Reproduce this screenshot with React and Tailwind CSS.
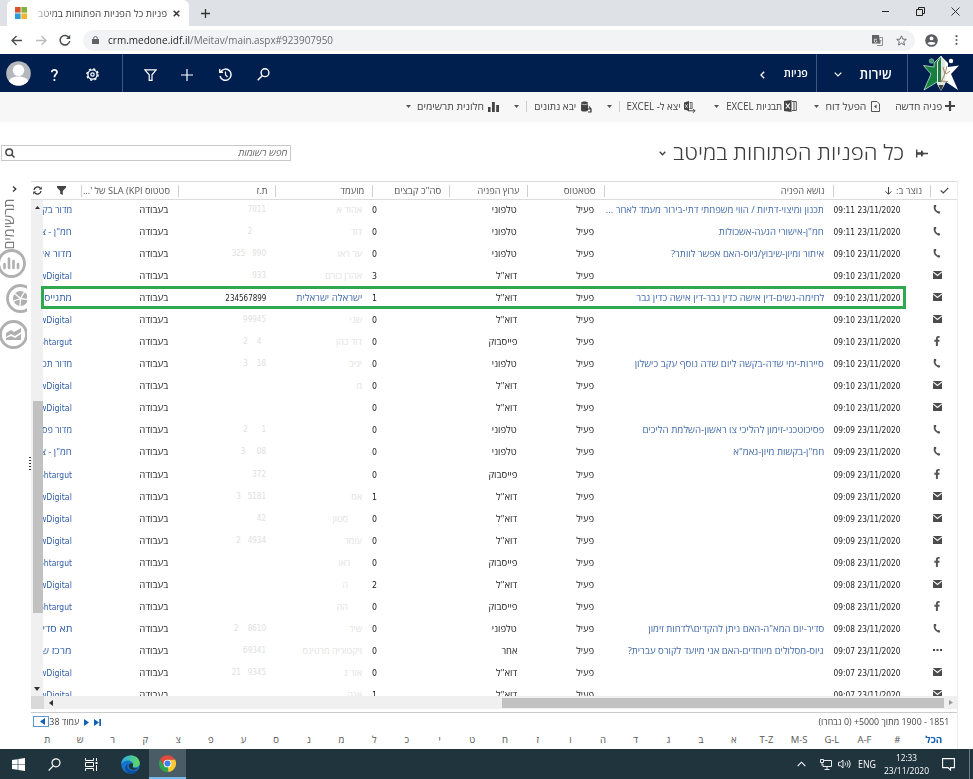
import { useLayoutEffect, useRef, useState } from 'react';
import { FaFacebookF } from 'react-icons/fa';

// Text squeezed or stretched horizontally to a known width.
function Fit({ w, className = '', inner = '', rtl = false, children }) {
  const ref = useRef(null);
  const [scale, setScale] = useState(1);
  useLayoutEffect(() => {
    const natural = parseFloat(getComputedStyle(ref.current).width) || w;
    setScale(w / natural);
  }, [w]);
  return (
    <span className={`flex shrink-0 ${className}`} style={{ width: w }} dir={rtl ? 'rtl' : 'ltr'}>
      <span
        ref={ref}
        className={`shrink-0 whitespace-nowrap ${inner} ${rtl ? 'origin-right' : 'origin-left'}`}
        style={{ transform: `scaleX(${scale})` }}
      >
        {children}
      </span>
    </span>
  );
}

const M = 'מתגייסי';
const ROWS = [
  ['p', '09:11', 'תכנון ומיצוי-דתיות / הווי משפחתי דתי-בירור מעמד לאחר ...', 218, 't', '0', 'אהוד א', '    7011', 'מדור בק'],
  ['p', '09:11', 'חמ"ן-אישורי הגעה-אשכולות', 105, 't', '0', 'דוד', '2      ', 'חמ"ן - צ'],
  ['p', '09:10', 'איתור ומיון-שיבוץ/גיוס-האם אפשר לוותר?', 153, 't', '0', 'ער ראו', '325   990', 'מדור אי'],
  ['m', '09:10', '', 0, 'e', '3', 'אהרן כורם', '    933', 'wDigital'],
  ['m', '09:10', 'לחימה-נשים-דין אישה כדין גבר-דין אישה כדין גבר', 188, 'e', '1', 'x', 'x', M],
  ['m', '09:10', '', 0, 'e', '0', 'שני', '   99945', 'wDigital'],
  ['f', '09:10', '', 0, 'b', '0', 'דוד כהן', '2    4  ', 'Shtargut'],
  ['p', '09:10', 'סיירות-ימי שדה-בקשה ליום שדה נוסף עקב כישלון', 189, 't', '0', 'יניב', '3    18', 'מדור תכ'],
  ['m', '09:10', '', 0, 'e', '0', 'מ', '', 'wDigital'],
  ['m', '09:10', '', 0, 'e', '0', '', '', 'wDigital'],
  ['p', '09:09', 'פסיכוטכני-זימון להליכי צו ראשון-השלמת הליכים', 182, 't', '0', '', '2      1', 'מדור פס'],
  ['p', '09:09', 'חמ"ן-בקשות מיון-גאמ"א', 91, 't', '0', '', '3     08', 'חמ"ן - צ'],
  ['f', '09:09', '', 0, 'b', '0', '', '     372', 'Shtargut'],
  ['m', '09:09', '', 0, 'e', '1', 'אס', '3   5181', 'wDigital'],
  ['m', '09:09', '', 0, 'e', '0', '      סטון', '    42', 'wDigital'],
  ['m', '09:09', '', 0, 'e', '0', 'עומר', '2   4934', 'wDigital'],
  ['f', '09:08', '', 0, 'b', '0', '     ראו', '', 'Shtargut'],
  ['m', '09:08', '', 0, 'e', '2', '      ה', '', 'wDigital'],
  ['f', '09:08', '', 0, 'b', '0', '      הה', '', 'Shtargut'],
  ['p', '09:08', 'סדיר-יום המא"ה-האם ניתן להקדים\\לדחות זימון', 176, 't', '0', 'שיר', '2    8610', 'תא סדי'],
  ['o', '09:07', 'גיוס-מסלולים מיוחדים-האם אני מיועד לקורס עברית?', 196, 'o', '0', 'ויקטוריה מרטינס', '   69341', 'מרכז ש'],
  ['m', '09:07', '', 0, 'e', '0', 'אור ג', '21   9345', 'wDigital'],
  ['m', '09:07', '', 0, 'e', '1', 'אנה', '', 'wDigital'],
];
const CHANNEL = { t: ['טלפוני', 25], e: ['דוא"ל', 21], b: ['פייסבוק', 29], o: ['אחר', 16] };
const UNIT_W = { wDigital: 32, Shtargut: 33, 'חמ"ן - צ': 31, [M]: 30 };

function RowIcon({ kind }) {
  if (kind === 'p')
    return (
      <svg className="h-[10px] w-[8px]" viewBox="0 0 8 10" fill="none" stroke="#505050" strokeWidth="1.5">
        <path d="M2 1.5 C.6 4.5 2.5 8 5.8 8.7" strokeWidth="1.7" />
        <path d="M2 1v2.2 M4.9 8l2 .8" strokeWidth="2.3" />
      </svg>
    );
  if (kind === 'f') return <FaFacebookF className="h-[10px] w-[8px] text-[#555]" />;
  if (kind === 'o')
    return (
      <svg className="h-[4px] w-[9px]" viewBox="0 0 9 4" fill="#444">
        <rect y="1" width="2" height="2" /><rect x="3.5" y="1" width="2" height="2" /><rect x="7" y="1" width="2" height="2" />
      </svg>
    );
  return (
    <svg className="h-[8px] w-[9px]" viewBox="0 0 9 8">
      <path d="M0 0h9v8H0z" fill="#4c4c4c" />
      <path d="M0 .8 4.5 4.5 9 .8" fill="none" stroke="#fff" strokeWidth="1.1" />
    </svg>
  );
}

const TAHOMA = "font-['DejaVu_Sans_Condensed','DejaVu_Sans',sans-serif]";

function Row({ r }) {
  const [kind, time, subject, sw, ch, count, name, id, unit] = r;
  const c = CHANNEL[ch];
  const latin = /^[a-z]/i.test(unit);
  return (
    <div className="flex h-[22.04px] shrink-0 items-center">
      <div className="flex w-[27px] shrink-0 justify-end pb-[2px] pl-[2px]"><span className="flex w-[10px] justify-center"><RowIcon kind={kind} /></span></div>
      <div className={`w-[97px] shrink-0 pr-[29px] ${TAHOMA}`}><Fit w={67} rtl><bdo dir="ltr">{time} 23/11/2020</bdo></Fit></div>
      <div className="w-[229px] shrink-0 pr-[9px] text-[#416aa8]">{subject && <Fit w={sw} rtl>{subject}</Fit>}</div>
      <div className="w-[77px] shrink-0 pr-[10px]"><Fit w={18} rtl>פעיל</Fit></div>
      <div className="w-[78px] shrink-0 pr-[10px]"><Fit w={c[1]} rtl>{c[0]}</Fit></div>
      <div className={`flex w-[77px] shrink-0 justify-end ${TAHOMA}`}><Fit w={5}>{count}</Fit></div>
      <div className="w-[97px] shrink-0 overflow-hidden whitespace-pre pr-[10px] text-[#e2e2e2]">
        {name === 'x' ? <Fit w={66} rtl className="text-[#416aa8]">ישראלה ישראלית</Fit> : name}
      </div>
      <div className={`w-[97px] shrink-0 pr-[9px] ${TAHOMA}`}>
        {id === 'x' ? <Fit w={41} rtl>234567899</Fit> : <span dir="ltr" className="block whitespace-pre text-right text-[8px] text-[#e0e0e0]">{id}</span>}
      </div>
      <div className="w-[97px] shrink-0 pr-[10px]"><Fit w={29} rtl>בעבודה</Fit></div>
      <div className={`w-[38px] shrink-0 overflow-hidden pr-[9px] text-[#2f5da6] ${latin ? TAHOMA : ''}`}><Fit w={UNIT_W[unit] || 30} rtl>{unit}</Fit></div>
    </div>
  );
}

function Head({ width, children }) {
  return (
    <div className={`flex h-[12px] shrink-0 items-center border-l border-[#d0d0d0] pr-[8px] ${width}`}>{children}</div>
  );
}

function Caret({ className }) {
  return <svg className={`h-[3px] w-[5px] shrink-0 ${className}`} viewBox="0 0 5 3"><path d="M0 0h5L2.5 3z" fill="#555" /></svg>;
}

function ChromeTop() {
  return (
    <>
      <div className="flex h-[26px] bg-[#dee1e6]">
        <div className="ml-[7px] flex h-[26px] w-[182px] shrink-0 items-center rounded-t-[6px] bg-white">
          <svg className="ml-[8px] h-[12px] w-[12px] shrink-0" viewBox="0 0 12 12">
            <path d="M0 0h5.6v5.6H0z" fill="#d8532c" /><path d="M6.4 0H12v5.6H6.4z" fill="#84b13a" />
            <path d="M0 6.4h5.6V12H0z" fill="#2f9bd8" /><path d="M6.4 6.4H12V12H6.4z" fill="#f2b52e" />
          </svg>
          <div className="ml-[11px] w-[129px] shrink-0 text-[10px] text-[#454545] [mask-image:linear-gradient(to_left,#000_85%,#0005)]">
            <Fit w={129} rtl>פניות כל הפניות הפתוחות במיטב</Fit>
          </div>
          <svg className="ml-[6px] h-[7px] w-[7px] shrink-0" viewBox="0 0 7 7" stroke="#333" strokeWidth="1.5"><path d="M.7.7l5.6 5.6M6.3.7.7 6.3" /></svg>
        </div>
        <svg className="ml-[12px] mt-[9px] h-[9px] w-[9px]" viewBox="0 0 9 9" stroke="#333" strokeWidth="1.3"><path d="M4.5 0v9M0 4.5h9" /></svg>
        <div className="grow" />
        <svg className="mr-[27px] mt-[11px] h-[1px] w-[7px]" viewBox="0 0 7 1"><path d="M0 0h7v1H0z" fill="#222" /></svg>
        <svg className="mr-[26px] mt-[7px] h-[9px] w-[9px]" viewBox="0 0 9 9" fill="none" stroke="#222"><path d="M.5 2.5h6v6h-6zM2.5 2V.5h6v6H7" /></svg>
        <svg className="mr-[13px] mt-[7px] h-[9px] w-[9px]" viewBox="0 0 9 9" stroke="#222" strokeWidth=".9"><path d="M.5.5l8 8M8.5.5l-8 8" /></svg>
      </div>
      <div className="flex h-[28px] items-center bg-white">
        <svg className="ml-[11px] h-[11px] w-[11px] shrink-0" viewBox="0 0 11 11" fill="none" stroke="#4a4d51" strokeWidth="1.4"><path d="M11 5.5H1M5.5 1 1 5.5 5.5 10" /></svg>
        <svg className="ml-[14px] h-[11px] w-[11px] shrink-0" viewBox="0 0 11 11" fill="none" stroke="#b9bbbe" strokeWidth="1.3"><path d="M0 5.5h10M5.5 1 10 5.5 5.5 10" /></svg>
        <svg className="ml-[12px] h-[12px] w-[12px] shrink-0" viewBox="0 0 12 12" fill="none" stroke="#4a4d51" strokeWidth="1.5"><path d="M10 3.6A4.8 4.8 0 1 0 10.7 7" /><path d="M11.2.8v4.2H7z" fill="#4a4d51" stroke="none" /></svg>
        <div className="ml-[12px] flex h-[21px] w-[832px] shrink-0 items-center rounded-full bg-[#f1f3f4] text-[11px]">
          <svg className="ml-[9px] h-[8px] w-[7px] shrink-0" viewBox="0 0 7 8"><path d="M0 3h7v5H0z" fill="#5f6368" /><path d="M1.7 3.5V2.2a1.8 1.7 0 0 1 3.6 0v1.3" fill="none" stroke="#5f6368" /></svg>
          <Fit w={82} className="ml-[9px] text-[#26282b]">crm.medone.idf.il</Fit>
          <Fit w={143} className="text-[#6a6d71]">/Meitav/main.aspx#923907950</Fit>
          <div className="grow" />
          <svg className="h-[11px] w-[11px]" viewBox="0 0 11 11"><path d="M0 0h7l1.2 8.5H0z" fill="#5f6368" /><path d="M7.5 2.5H10.5v8H5" fill="none" stroke="#777" strokeWidth=".8" /><path d="M5 4.3H2.3v1.8a1.3 1.3 0 0 0 2.6 0H4" fill="none" stroke="#fff" strokeWidth=".7" /><path d="M9.5 5.5H7.8v3.3M9 7H8" stroke="#777" strokeWidth=".7" fill="none" /></svg>
          <svg className="ml-[13px] mr-[8px] h-[11px] w-[11px]" viewBox="0 0 24 24" fill="none" stroke="#5f6368" strokeWidth="2"><path d="m12 2 3 7 7.5.6-5.7 5 1.8 7.4-6.6-4-6.6 4 1.8-7.400-5.700-5L9 9z" /></svg>
        </div>
        <svg className="ml-[10px] h-[13px] w-[13px]" viewBox="0 0 13 13"><circle cx="6.5" cy="6.5" r="6.3" fill="#5a5d61" /><circle cx="6.5" cy="4.4" r="1.9" fill="#fff" /><path d="M2.5 9.3C3.300 7.700 9.700 7.700 10.500 9.300 8.800 11.400 4.200 11.400 2.500 9.300z" fill="#fff" /></svg>
        <svg className="ml-[17px] h-[10px] w-[3px]" viewBox="0 0 3 10" fill="#5a5d61"><circle cx="1.5" cy="1.2" r="1.1" /><circle cx="1.5" cy="5" r="1.1" /><circle cx="1.5" cy="8.8" r="1.1" /></svg>
      </div>
    </>
  );
}

function NavBar() {
  return (
    <div className="flex h-[38px] items-center bg-[#001f4e] text-white">
      <svg className="ml-[6px] h-[25px] w-[25px] shrink-0" viewBox="0 0 25 25">
        <circle cx="12.5" cy="12.5" r="12.3" fill="#b4b7bb" />
        <circle cx="12.5" cy="9.3" r="5.8" fill="#fff" /><path d="M3 20.200C4 14 21 14 22 20.200 17 26 8 26 3 20.200z" fill="#fff" />
      </svg>
      <svg className="ml-[20px] mt-[3px] h-[12px] w-[7px] shrink-0" viewBox="0 0 7 12" fill="none" stroke="#fff" strokeWidth="1.7"><path d="M.8 3.200C.8 0 6.100.3 6 3.200 6 5.200 3.400 5.300 3.400 8.300" /><path d="M3.400 10v2" /></svg>
      <svg className="ml-[28px] mt-[3px] h-[13px] w-[13px] shrink-0" viewBox="0 0 13 13" fill="none" stroke="#fff"><circle cx="6.5" cy="6.5" r="4.6" strokeWidth="1.3" /><circle cx="6.5" cy="6.5" r="1.7" strokeWidth="1.2" /><circle cx="6.5" cy="6.5" r="5.6" strokeWidth="1.4" strokeDasharray="2.2 2.2" /></svg>
      <div className="ml-[23px] h-[38px] w-px shrink-0 bg-[#40577b]" />
      <svg className="ml-[21px] mt-[3px] h-[12px] w-[13px] shrink-0" viewBox="0 0 13 12" fill="none" stroke="#fff" strokeWidth="1.2"><path d="M.9.8h11.200L8 5.800v5.500H5.200V5.800z" /></svg>
      <svg className="ml-[24px] mt-[3px] h-[12px] w-[12px] shrink-0" viewBox="0 0 12 12" stroke="#fff" strokeWidth="1.2"><path d="M6 0v12M0 6h12" /></svg>
      <svg className="ml-[26px] mt-[2px] h-[13px] w-[13px] shrink-0" viewBox="0 0 13 13" fill="none" stroke="#fff" strokeWidth="1.4"><path d="M1.700 3.700A5.600 5.600 0 1 1 1 8M.7 1v3.300H4" /><path d="M6.500 3.500v3.300l2 2.200" strokeWidth="1.2" /></svg>
      <svg className="ml-[25px] mt-[2px] h-[13px] w-[13px] shrink-0" viewBox="0 0 13 13" fill="none" stroke="#fff" strokeWidth="1.4"><circle cx="8" cy="4.7" r="3.9" /><path d="M5.200 7.700.7 12.300" /></svg>
      <div className="grow" />
      <svg className="mr-[19px] mt-[3px] h-[8px] w-[5px]" viewBox="0 0 5 8" fill="none" stroke="#fff" strokeWidth="1.3"><path d="M4.200.7 1 4l3.200 3.300" /></svg>
      <Fit w={24} rtl className="mt-[1px] text-[11px] font-semibold">פניות</Fit>
      <div className="ml-[8px] h-[38px] w-px bg-[#40577b]" />
      <svg className="ml-[17px] mt-[3px] h-[5px] w-[8px]" viewBox="0 0 8 5" fill="none" stroke="#fff" strokeWidth="1.2"><path d="M.7.7 4 4 7.300.7" /></svg>
      <Fit w={32} rtl className="ml-[18px] text-[14px] font-semibold">שירות</Fit>
      <div className="ml-[15px] h-[38px] w-px bg-[#40577b]" />
      <svg className="ml-[14px] mr-[13px] h-[37px] w-[38px]" viewBox="0 0 38 37">
        <circle cx="9.5" cy="6" r="2.300" fill="#3c9a75" stroke="#9cc8b4" strokeWidth=".6" /><circle cx="29" cy="6" r="2.2" fill="#fff" />
        <path d="M19 1 12 8v4L1.500 10.500 9 19 2 35l13-8 4 8z" fill="#15803f" stroke="#c5e0cf" strokeWidth=".8" />
        <path d="M19 1l7 7v4l11-1.500L29 19l7 16-12-8-5 8z" fill="#fff" />
        <path d="M19 1 15 7v22l4 7 4-7V7z" fill="#dfe6de" />
        <path d="M16 7l3-5v25h-3z" fill="#277849" /><path d="M25 11l-2 8-4 8M21 12l2 7M24 19l4-3M18 26l8 .5" stroke="#9b7a5b" fill="none" strokeWidth=".9" />
        <path d="M16.500 30h5L19 36z" fill="#39423d" />
      </svg>
    </div>
  );
}

function Toolbar() {
  const div = 'h-[11px] w-px shrink-0 bg-[#ccc]';
  return (
    <div className="flex h-[30px] items-center bg-[#f7f7f7] pb-[2px] text-[10px] text-[#444]">
      <Caret className="ml-[406px]" />
      <Fit w={67} rtl className="ml-[6px]">חלונית תרשימים</Fit>
      <svg className="ml-[4px] mt-[2px] h-[10px] w-[11px] shrink-0" viewBox="0 0 11 10" fill="#444"><path d="M0 5h2.600v5H0zM4 0h2.800v10H4zM8.200 3H11v7H8.200z" /></svg>
      <Caret className="ml-[15px]" />
      <div className={`ml-[7px] ${div}`} />
      <Fit w={42} rtl className="ml-[7px]">יבא נתונים</Fit>
      <svg className="ml-[5px] mt-[1px] h-[12px] w-[11px] shrink-0" viewBox="0 0 11 12"><path d="M0 2c0-2 7-2 7 0v7c0 2-7 2-7 0z" fill="#444" /><path d="M0 2.800c1.500 1 5.500 1 7 0" stroke="#eee" fill="none" strokeWidth=".7" /><path d="M5 8h4.500M8 5.500l2 2.500V11H7" stroke="#333" strokeWidth="1.2" fill="none" /></svg>
      <Caret className="ml-[15px]" />
      <div className={`ml-[7px] ${div}`} />
      <Fit w={54} rtl className="ml-[7px]">יצא ל- EXCEL</Fit>
      <svg className="ml-[3px] mt-[1px] h-[12px] w-[12px] shrink-0" viewBox="0 0 12 12"><path d="M0 1.500 5 0v10L0 8.500z" fill="#444" /><path d="M5.500 1.500h2.700v6H5.500M6.800 1.500v6" stroke="#555" fill="none" strokeWidth=".8" /><path d="M1.300 3.300l2.300 3.500M3.600 3.300 1.300 6.800" stroke="#fff" strokeWidth=".7" /><path d="M4 9.800h7M9 7.800l2 2-2 2" stroke="#444" fill="none" /></svg>
      <Caret className="ml-[18px]" />
      <Fit w={56} rtl className="ml-[7px]">תבניות EXCEL</Fit>
      <svg className="ml-[2px] h-[12px] w-[13px] shrink-0" viewBox="0 0 13 12"><path d="M0 1 7.500 0v12L0 11z" fill="#444" /><path d="M8 1.500h4.300v9H8M10 1.500v9" stroke="#555" fill="none" /><path d="M1.800 3.500l4 5M5.800 3.500l-4 5" stroke="#fff" strokeWidth="1.2" /></svg>
      <Caret className="ml-[17px]" />
      <Fit w={41} rtl className="ml-[6px]">הפעל דוח</Fit>
      <svg className="ml-[5px] mt-[1px] h-[11px] w-[9px] shrink-0" viewBox="0 0 9 11"><path d="M.5.5H6L8.500 3v7.500h-8z" fill="none" stroke="#555" /><path d="M5.500 3.500v4L3 5.500z" fill="#444" /></svg>
      <Fit w={47} rtl className="ml-[15px]">פניה חדשה</Fit>
      <svg className="ml-[3px] h-[10px] w-[10px] shrink-0" viewBox="0 0 10 10" stroke="#444" strokeWidth="2.2"><path d="M5 0v10M0 5h10" /></svg>
    </div>
  );
}

function TitleRow() {
  return (
    <div className="flex h-[59px] items-center pt-[3px]">
      <div className="ml-[1px] flex h-[16px] w-[290px] shrink-0 items-center justify-between border border-[#c8c8c8] px-[3px] text-[9.5px] italic text-[#666]">
        <svg className="h-[10px] w-[10px]" viewBox="0 0 10 10" fill="none" stroke="#444" strokeWidth="1.5"><circle cx="4.2" cy="4.2" r="3.3" /><path d="M6.700 6.700 9.500 9.500" /></svg>
        <Fit w={49} rtl>חפש רשומות</Fit>
      </div>
      <svg className="ml-[368px] mt-[1px] h-[5px] w-[7px] shrink-0" viewBox="0 0 7 5" fill="none" stroke="#444" strokeWidth="1.4"><path d="M.7.8 3.500 3.800 6.300.8" /></svg>
      <Fit w={231} rtl className="ml-[7px] text-[21px] font-light text-[#3c3c3c]">כל הפניות הפתוחות במיטב</Fit>
      <svg className="ml-[12px] h-[9px] w-[12px] shrink-0" viewBox="0 0 12 9" fill="#444"><path d="M0 .5h1.400v2.700h3.600V1.500h1.200L7.500 3.800H12v1.400H7.500L6.200 7.500H5V5.800H1.400v2.700H0z" /></svg>
    </div>
  );
}

function SidePanel() {
  const ring = 'h-[29px] w-[29px] shrink-0';
  return (
    <div className="flex w-[31px] shrink-0 flex-col overflow-hidden">
      <svg className="ml-[12px] mt-[5px] h-[6px] w-[5px] shrink-0" viewBox="0 0 5 6" fill="none" stroke="#333" strokeWidth="1.3"><path d="M1 .5 3.800 3 1 5.500" /></svg>
      <div className="mt-[6px] flex h-[51px] w-[17px] shrink-0 items-center justify-center">
        <div className="shrink-0 -rotate-90 text-[14px] leading-[16px] text-[#777]"><Fit w={51} rtl>תרשימים</Fit></div>
      </div>
      <svg className={`-ml-[3px] ${ring}`} viewBox="0 0 29 29" fill="none" stroke="#b0b0b0"><circle cx="14.5" cy="14.5" r="13" strokeWidth="2.8" /><path d="M7.500 19v-4M12 19V9.500M16.500 19v-7M21 19v-4" strokeWidth="2.6" strokeLinecap="round" /></svg>
      <div className="mt-[6px] w-[27px] shrink-0 overflow-hidden">
        <svg className={`ml-[6px] ${ring}`} viewBox="0 0 29 29" fill="none" stroke="#b0b0b0"><circle cx="14.5" cy="14.5" r="13" strokeWidth="2.8" /><circle cx="14.5" cy="14.5" r="7.5" fill="#b0b0b0" stroke="none" /><path d="M14.500 14.500 8 9M14.500 14.500 19 7M14.500 14.500 14 23M14.500 14.500l8 1M14.500 14.500l-8 3" stroke="#fff" strokeWidth="1.3" /></svg>
      </div>
      <div className="mt-[7px] w-[27px] shrink-0 overflow-hidden">
        <svg className={`-ml-[1px] ${ring}`} viewBox="0 0 29 29" fill="none" stroke="#b0b0b0"><circle cx="14.5" cy="14.5" r="13" strokeWidth="2.8" /><path d="M7 13l5-3 3 2 7-4v4l-6 4-4-2-5 3zM7 18l5-2 4 2 6-4v6H7z" fill="#b0b0b0" stroke="none" /></svg>
      </div>
      <div className="ml-[29px] mt-[108px] flex flex-col gap-[2px]">
        {[0, 1, 2, 3, 4].map((i) => <div key={i} className="h-[1px] w-[2px] bg-[#333]" />)}
      </div>
    </div>
  );
}

function Grid() {
  return (
    <div className="relative flex w-[927px] shrink-0 flex-col border-r border-[#ececec]">
      <div dir="rtl" className="flex h-[19px] shrink-0 items-center border-b border-t border-[#dcdcdc] text-[#555]">
        <div className="flex h-[12px] w-[27px] shrink-0 items-center justify-center border-l border-[#d0d0d0]">
          <svg className="h-[7px] w-[9px]" viewBox="0 0 9 7" fill="none" stroke="#444" strokeWidth="1.2"><path d="M.7 3.500 3.300 6 8.300.8" /></svg>
        </div>
        <Head width="w-[97px]"><Fit w={26} rtl>נוצר ב:</Fit>
          <svg className="mr-[4px] h-[8px] w-[7px]" viewBox="0 0 7 8" fill="none" stroke="#444"><path d="M3.500 0v7M.6 4.300l2.900 3 2.900-3" /></svg>
        </Head>
        <Head width="w-[229px]"><Fit w={44} rtl>נושא הפניה</Fit></Head>
        <Head width="w-[77px]"><Fit w={32} rtl>סטאטוס</Fit></Head>
        <Head width="w-[78px]"><Fit w={42} rtl>ערוץ הפניה</Fit></Head>
        <Head width="w-[77px]"><Fit w={47} rtl>סה"כ קבצים</Fit></Head>
        <Head width="w-[97px]"><Fit w={24} rtl>מועמד</Fit></Head>
        <Head width="w-[97px]"><Fit w={11} rtl>ת.ז</Fit></Head>
        <Head width="w-[97px]"><Fit w={87} rtl>סטטוס SLA (KPI של '...</Fit></Head>
        <svg className="mr-[15px] h-[9px] w-[9px] shrink-0" viewBox="0 0 9 9" fill="#444"><path d="M0 0h9v1.500L5.800 5v4L3.200 7.800V5L0 1.500z" /></svg>
        <svg className="mr-[15px] h-[9px] w-[9px] shrink-0" viewBox="0 0 9 9" fill="none" stroke="#333" strokeWidth="1.3"><path d="M1 4a3.500 3.500 0 0 1 6-2M8 5a3.500 3.500 0 0 1-6 2" /><path d="M8.700.5v3H5.700zM.3 8.500v-3h3z" fill="#333" stroke="none" /></svg>
      </div>
      <div dir="rtl" className="flex h-[496px] shrink-0 overflow-hidden">
        <div className="-mt-[0.9px] flex w-[914px] shrink-0 flex-col text-[#222]">
          {ROWS.map((r, i) => <Row key={i} r={r} />)}
        </div>
        <div className="flex w-[12px] shrink-0 flex-col items-center bg-[#f0f0f0]">
          <svg className="mt-[6px] h-[3px] w-[5px] shrink-0" viewBox="0 0 5 3"><path d="M0 3h5L2.500 0z" fill="#333" /></svg>
          <div className="mt-[192px] h-[212px] w-[10px] shrink-0 self-start bg-[#c1c1c1]" />
          <svg className="mt-[74px] h-[4px] w-[6px] shrink-0" viewBox="0 0 6 4"><path d="M0 0h6L3 4z" fill="#333" /></svg>
        </div>
      </div>
      <div className="flex h-[13px] shrink-0 items-center bg-[#f0f0f0]">
        <div className="h-[13px] w-[13px] bg-[#d9d9d9]" />
        <svg className="ml-[5px] h-[6px] w-[4px]" viewBox="0 0 4 6"><path d="M4 0v6L0 3z" fill="#333" /></svg>
        <div className="ml-[449px] h-[10px] w-[442px] bg-[#c1c1c1]" />
        <svg className="ml-[5px] h-[5px] w-[4px]" viewBox="0 0 4 5"><path d="M0 0v5l4-2.500z" fill="#999" /></svg>
      </div>
      <div className="mt-[3px] flex h-[18px] shrink-0 items-center border-t border-[#ccc] text-[#444]">
        <div className="ml-[2px] flex h-[11px] w-[16px] items-center justify-end border border-[#5c96cf] pr-[3px]">
          <svg className="h-[7px] w-[5px]" viewBox="0 0 5 7"><path d="M5 0v7L0 3.500z" fill="#1160b7" /></svg>
        </div>
        <Fit w={30} rtl>עמוד 38</Fit>
        <svg className="ml-[5px] mt-[1px] h-[7px] w-[5px]" viewBox="0 0 5 7"><path d="M0 0v7l5-3.500z" fill="#1160b7" /></svg>
        <svg className="ml-[5px] mt-[1px] h-[7px] w-[7px]" viewBox="0 0 7 7"><path d="M0 0v7l5-3.500zM5.300 0H7v7H5.300z" fill="#1160b7" /></svg>
        <div className="grow" />
        <Fit w={131} rtl className="mr-[8px]">1851 - 1900 מתוך 5000+ (0 נבחרו)</Fit>
      </div>
      <div className="flex h-[20px] shrink-0 items-center text-[9.5px] text-[#555]">
        {['ת','ש','ר','ק','צ','פ','ע','ס','נ','מ','ל','כ','י','ט','ח','ז','ו','ה','ד','ג','ב','א','T-Z','M-S','G-L','A-F','#'].map((l) => (
          <div key={l} className="w-[32.7px] shrink-0 text-center">{l}</div>
        ))}
        <Fit w={17} rtl className="ml-[12px] font-bold text-[#1160b7]">הכל</Fit>
      </div>
      <div className="absolute left-[10px] top-[105px] h-[23px] w-[865px] border-[3px] border-[#2fa84f]" />
    </div>
  );
}

function Taskbar() {
  return (
    <div className="flex h-[30px] shrink-0 items-center bg-[#20343e] text-white">
      <svg className="ml-[12px] h-[13px] w-[13px] shrink-0" viewBox="0 0 13 13" fill="#fff"><path d="M0 2l5.700-.8v5H0zM6.300 1.100 13 0v6.200H6.300zM0 6.800h5.700v5L0 11zM6.300 6.800H13V13l-6.700-1z" /></svg>
      <svg className="ml-[23px] h-[13px] w-[13px] shrink-0" viewBox="0 0 13 13" fill="none" stroke="#fff" strokeWidth="1.2"><circle cx="8" cy="4.8" r="4" /><path d="M5.200 7.800.7 12.500" /></svg>
      <svg className="ml-[24px] h-[13px] w-[13px] shrink-0" viewBox="0 0 13 13" fill="none" stroke="#fff"><path d="M.5 0v2.500h8V0M.5 4.500h8v4h-8zM.5 13v-2.500h8V13M11.500 0v3M11.500 7v6" /><path d="M10.500 4h2v2h-2z" fill="#fff" stroke="none" /></svg>
      <svg className="ml-[23px] h-[19px] w-[19px] shrink-0" viewBox="0 0 19 19">
        <defs>
          <linearGradient id="edgeTop" x1="0" x2="1"><stop stopColor="#28a9e8" /><stop offset="1" stopColor="#65d95c" /></linearGradient>
        </defs>
        <circle cx="9.5" cy="9.5" r="9.3" fill="#1474c9" />
        <path d="M.2 9C1-2 18-2 18.800 8c0 3-2.300 4.200-5.300 4.200-2 0-2.500-.8-1.700-1.900C13 7 8 4.500 4.500 6 2 7 .5 8 .2 9z" fill="url(#edgeTop)" />
        <path d="M7.500 8.500c-3 4 .5 9.500 9.300 6.500-2 3.500-6 4.500-9 3.300C3 16 3 10.500 7.500 8.500z" fill="#0d4f9e" />
        <path d="M9.500 8.500c2-.7 3.300 1 2.300 2.500-.7 1.700 1.200 2.700 5 2.200-3 2.500-9 1.800-9-2 0-1.200.8-2.200 1.700-2.700z" fill="#20343e" />
      </svg>
      <div className="ml-[9px] flex h-[30px] w-[37px] shrink-0 items-center justify-center border-b-2 border-[#76b9ed] bg-[#4a5d67]">
        <svg className="h-[17px] w-[17px]" viewBox="0 0 18 18">
          <path d="M9 9V4.500H16.800A9 9 0 0 1 9 18z" fill="#f8c932" />
          <path d="M9 9l1 9A9 9 0 0 1 1.200 4.500L5 11z" fill="#2fa350" />
          <path d="M1.200 4.500A9 9 0 0 1 16.800 5H9L5 11z" fill="#e04a3c" />
          <circle cx="9" cy="9" r="4.100" fill="#fff" /><circle cx="9" cy="9" r="3.200" fill="#3f80e8" />
        </svg>
      </div>
      <div className="grow" />
      <svg className="mr-[14px] h-[6px] w-[9px]" viewBox="0 0 10 6" fill="none" stroke="#fff" strokeWidth="1.2"><path d="M.7 5.300 5 1l4.300 4.300" /></svg>
      <svg className="mr-[6px] h-[11px] w-[12px]" viewBox="0 0 12 11" fill="none" stroke="#fff" strokeWidth=".9"><path d="M4 1.500h7.500v6H3V5M7 7.500v2.500M4.500 10.500h5M.5.500h3v3h-3zM2 3.500v3" /></svg>
      <svg className="mr-[7px] h-[10px] w-[13px]" viewBox="0 0 13 10" fill="none" stroke="#fff" strokeWidth=".9"><path d="M.5 3.300h2L5 1v8L2.500 6.700h-2zM7 3.500c.8 1 .8 2 0 3M8.800 2.200c1.500 2 1.500 3.600 0 5.600M10.600 1c2 2.600 2 5.400 0 8" /></svg>
      <Fit w={18} className="text-[10px]">ENG</Fit>
      <div className="ml-[7px] flex w-[46px] flex-col items-center text-[9.5px] leading-[13px]">
        <Fit w={21}>12:33</Fit>
        <Fit w={45}>23/11/2020</Fit>
      </div>
      <svg className="ml-[13px] h-[13px] w-[13px]" viewBox="0 0 13 13" fill="none" stroke="#fff" strokeWidth="1.1"><path d="M.6.6h11.800v9H8.500v2.500L6 9.600H.6z" /></svg>
      <div className="ml-[14px] mr-[3px] h-[30px] w-px bg-[#6d7b82]" />
    </div>
  );
}

export default function App() {
  return (
    <div className="flex h-[779px] w-[973px] flex-col overflow-hidden bg-white font-['Open_Sans','Noto_Sans','DejaVu_Sans',sans-serif]">
      <ChromeTop />
      <NavBar />
      <Toolbar />
      <TitleRow />
      <div className="flex h-[568px] shrink-0 text-[9px] font-medium leading-[12px]">
        <SidePanel />
        <Grid />
      </div>
      <Taskbar />
    </div>
  );
}
